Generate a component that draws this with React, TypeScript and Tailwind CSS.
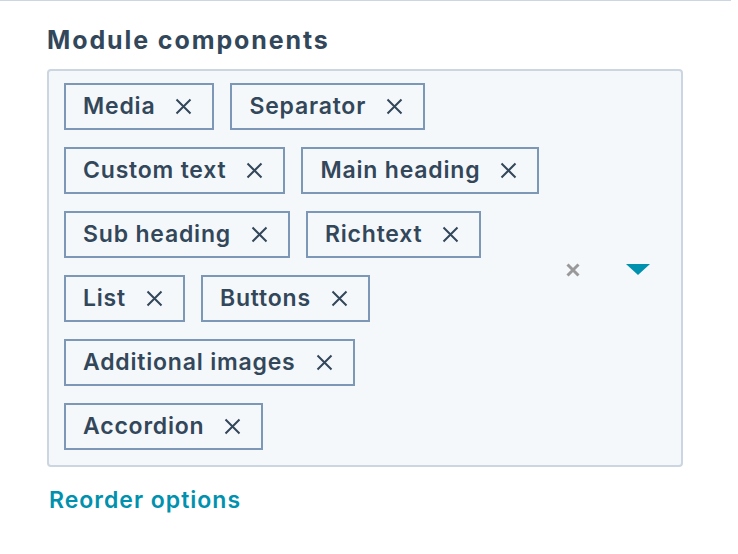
import React from "react";

const rows: string[][] = [
  ["Media", "Separator"],
  ["Custom text", "Main heading"],
  ["Sub heading", "Richtext"],
  ["List", "Buttons"],
  ["Additional images"],
  ["Accordion"],
];

function XIcon() {
  return (
    <svg width="17" height="17" viewBox="0 0 17 17" className="shrink-0">
      <path d="M1.5 1.5 L15.5 15.5 M15.5 1.5 L1.5 15.5" stroke="#33475b" strokeWidth="2" strokeLinecap="butt" />
    </svg>
  );
}

function Tag({ label }: { label: string }) {
  return (
    <div className="flex h-[47px] items-center border-2 border-[#7c98b6] pl-[17px] pr-[20px]">
      <span className="text-[23px] font-semibold tracking-[0.8px] text-[#33475b] leading-none">{label}</span>
      <span className="ml-[20px] flex items-center">
        <XIcon />
      </span>
    </div>
  );
}

export default function App() {
  return (
    <div
      className="w-[738px] h-[554px] bg-white"
      style={{ fontFamily: "Inter, 'Noto Sans', sans-serif" }}
    >
      <div className="h-px w-[731px] bg-[#cbd6e2]" />
      <div className="pl-[47px] pt-[24px]">
        <h2 className="text-[25px] font-bold tracking-[1.9px] text-[#33475b] leading-[30px]">Module components</h2>
        <div className="mt-[14px] flex w-[636px] rounded-[4px] border-2 border-[#cbd6e2] bg-[#f5f8fa] pl-[15px] pt-[12px] pb-[15px]">
          <div className="flex flex-1 flex-col gap-[17px]">
            {rows.map((r, i) => (
              <div key={i} className="flex gap-[16px]">
                {r.map((t) => (
                  <Tag key={t} label={t} />
                ))}
              </div>
            ))}
          </div>
          <div className="flex items-center pt-[6px] pr-[31px] gap-[46px]">
            <svg width="14" height="14" viewBox="0 0 14 14">
              <path d="M1.5 1.5 L12.5 12.5 M12.5 1.5 L1.5 12.5" stroke="#999999" strokeWidth="3" />
            </svg>
            <svg width="24" height="11" viewBox="0 0 24 11">
              <path d="M0 0 H24 L12 11 Z" fill="#0091ae" />
            </svg>
          </div>
        </div>
        <div className="mt-[20px] pl-[2px] text-[23px] font-semibold tracking-[1px] text-[#0091ae] leading-[26px]">Reorder options</div>
      </div>
    </div>
  );
}
